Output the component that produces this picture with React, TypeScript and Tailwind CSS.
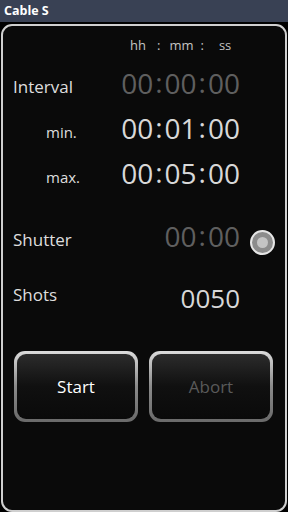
import React from 'react';

const font = { fontFamily: '"Open Sans", "Noto Sans", sans-serif' };

const Time: React.FC<{ parts: string[]; dim?: boolean }> = ({ parts, dim }) => (
  <div className={`flex items-center text-[28px] leading-none mb-[3px] ${dim ? 'text-[#5f5f5f]' : 'text-[#d8d8d8]'}`}>
    {parts.map((p, i) => (
      <React.Fragment key={i}>
        {i > 0 && <span className="px-[2px] pb-[3px]">:</span>}
        <span>{p}</span>
      </React.Fragment>
    ))}
  </div>
);

const GlossButton: React.FC<{ label: string; disabled?: boolean }> = ({ label, disabled }) => (
  <button className="flex-1 h-[71px] rounded-[11px] p-[3px] bg-gradient-to-b from-[#dcdcdc] via-[#8a8a8a] to-[#6a6a6a]">
    <div
      className={`w-full h-full rounded-[9px] bg-gradient-to-b from-[#2c2c2c] via-[#101010] to-[#0a0a0a] flex items-center justify-center text-[17px] ${
        disabled ? 'text-[#5a5a5a]' : 'text-white'
      }`}
    >
      {label}
    </div>
  </button>
);

export default function App() {
  return (
    <div className="w-[288px] h-[512px] bg-black flex flex-col overflow-hidden" style={font}>
      <div className="h-[22px] bg-[#394154] flex items-center px-[4px] text-white font-bold text-[12.5px]">
        Cable S
      </div>
      <div className="flex-1 pt-[2px] px-[1px]">
        <div className="h-full rounded-[11px] border-2 border-[#cfcfcf] bg-[#0a0a0a] flex flex-col">
          <div className="h-[20px] mt-[10px] flex items-center pl-[127px] text-[13px] text-[#c4c4c4]">
            <span>hh</span>
            <span className="ml-[11px]">:</span>
            <span className="ml-[9px]">mm</span>
            <span className="ml-[7px]">:</span>
            <span className="ml-[15px]">ss</span>
          </div>

          <div className="h-[45px] mt-[6px] flex items-center justify-between pl-[10px] pr-[45px]">
            <span className="text-[17px] text-[#dedede] mt-[5px]">Interval</span>
            <Time parts={['00', '00', '00']} dim />
          </div>
          <div className="h-[45px] flex items-center justify-between pl-[43px] pr-[45px]">
            <span className="text-[15px] text-[#dedede] mt-[5px]">min.</span>
            <Time parts={['00', '01', '00']} />
          </div>
          <div className="h-[45px] flex items-center justify-between pl-[43px] pr-[45px]">
            <span className="text-[15px] text-[#dedede] mt-[5px]">max.</span>
            <Time parts={['00', '05', '00']} />
          </div>

          <div className="h-[45px] mt-[18px] flex items-center pl-[10px] pr-[10px]">
            <span className="text-[17px] text-[#dedede] mt-[5px] flex-1">Shutter</span>
            <Time parts={['00', '00']} dim />
            <div className="ml-[10px] mt-[10px] w-[25px] h-[25px] rounded-full border-2 border-[#e6e6e6] bg-[#8c8c8c] flex items-center justify-center">
              <div className="w-[11px] h-[11px] rounded-full bg-[#c4c4c4]" />
            </div>
          </div>

          <div className="h-[45px] mt-[14px] flex items-center justify-between pl-[10px] pr-[45px]">
            <span className="text-[17px] text-[#dedede] mb-[4px]">Shots</span>
            <span className="text-[26px] text-[#d8d8d8] mt-[3px] leading-none">0050</span>
          </div>

          <div className="flex gap-[11px] pl-[11px] pr-[12px] mt-[32px]">
            <GlossButton label="Start" />
            <GlossButton label="Abort" disabled />
          </div>
        </div>
      </div>
    </div>
  );
}
